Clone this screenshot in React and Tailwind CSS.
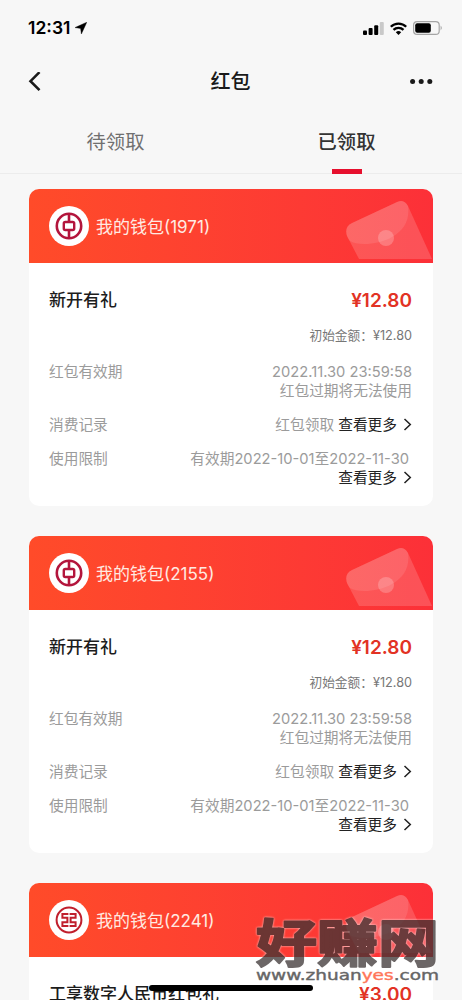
import { useState } from "react";

const cards = [
  { bank: "boc", wallet: "1971", title: "新开有礼", amount: "12.80" },
  { bank: "boc", wallet: "2155", title: "新开有礼", amount: "12.80" },
  { bank: "icbc", wallet: "2241", title: "工享数字人民币红包礼", amount: "3.00" },
];

export default function App() {
  const [tab, setTab] = useState("received");

  return (
    <div className="relative flex h-[1000px] w-[462px] flex-col overflow-hidden bg-[#f7f7f7] font-['Inter','Noto_Sans_CJK_SC',sans-serif]">
      <StatusBar />
      <NavBar />
      <div className="flex h-[64px] shrink-0 border-b border-[#ececec]">
        <Tab active={tab === "pending"} onClick={() => setTab("pending")}>待领取</Tab>
        <Tab active={tab === "received"} onClick={() => setTab("received")}>已领取</Tab>
      </div>
      <div className="flex flex-col gap-[30px] pt-[15px] pr-[29px] pl-[29px]">
        {cards.map((card) => (
          <Card key={card.wallet} {...card} />
        ))}
      </div>
      <div className="absolute top-[985px] left-[149px] h-[6px] w-[164px] rounded-full bg-black" />
      <Watermark />
    </div>
  );
}

function StatusBar() {
  return (
    <div className="flex h-[54px] shrink-0 items-center justify-between pt-[2px] pr-[19px] pl-[28px] text-black">
      <div className="flex items-center gap-[5px]">
        <span className="text-[17.5px] font-semibold">12:31</span>
        <svg width="12" height="12" viewBox="0 0 12 12">
          <path d="M11.8 0.2 L0 5.6 L5.6 6.4 L6.4 12 Z" fill="currentColor" stroke="currentColor" strokeWidth="0.4" />
        </svg>
      </div>
      <div className="flex items-center gap-[6px]">
        <svg width="21" height="13" viewBox="0 0 21 13">
          <rect x="0" y="8.5" width="4" height="4.5" rx="1" />
          <rect x="5.6" y="6" width="4" height="7" rx="1" />
          <rect x="11.2" y="3.2" width="4" height="9.8" rx="1" />
          <rect x="16.8" y="0" width="4" height="13" rx="1" fill="#c9c9c9" />
        </svg>
        <svg width="17" height="13" viewBox="0 0 17 13" fill="none" stroke="currentColor" strokeWidth="2.3">
          <path d="M0.8 4.8 A10.9 10.9 0 0 1 16.2 4.8" />
          <path d="M3.5 7.9 A7 7 0 0 1 13.5 7.9" />
          <path d="M8.5 13 L5.8 10.3 A3.9 3.9 0 0 1 11.2 10.3 Z" fill="currentColor" stroke="none" />
        </svg>
        <svg width="30" height="14" viewBox="0 0 30 14">
          <rect x="0.6" y="0.6" width="25.6" height="12.8" rx="3.5" fill="none" stroke="#a5a5a5" strokeWidth="1.2" />
          <rect x="2.2" y="2.2" width="15.6" height="9.6" rx="2" />
          <path d="M27.6 4.6 Q30 7 27.6 9.4 Z" fill="#a5a5a5" />
        </svg>
      </div>
    </div>
  );
}

function NavBar() {
  return (
    <div className="flex h-[56px] shrink-0 items-center justify-between pr-[29px] pl-[28px] text-[#1a1a1a]">
      <svg width="24" height="20" viewBox="0 0 24 20" fill="none" stroke="currentColor" strokeWidth="2.6">
        <path d="M11.5 0.2 L2.5 9.2 L11.5 18.2" />
      </svg>
      <h1 className="text-[20px] leading-[56px] font-medium">红包</h1>
      <svg width="24" height="7" viewBox="0 0 24 7" fill="currentColor">
        <circle cx="3.6" cy="2.6" r="2.5" />
        <circle cx="12.2" cy="2.6" r="2.5" />
        <circle cx="20.8" cy="2.6" r="2.5" />
      </svg>
    </div>
  );
}

function Tab({ active, onClick, children }) {
  return (
    <button onClick={onClick} className="relative flex flex-1 justify-center pt-[17px] text-[19.3px] leading-[30px]">
      <span className={active ? "font-medium text-[#333]" : "text-[#707070]"}>{children}</span>
      {active && <span className="absolute -bottom-px left-1/2 h-[5px] w-[30px] -translate-x-1/2 bg-[#e60f2d]" />}
    </button>
  );
}

function Card({ bank, wallet, title, amount }) {
  return (
    <section className="h-[317px] shrink-0 overflow-hidden rounded-[10px] bg-white">
      <div className="relative flex h-[74px] items-center gap-[7px] bg-linear-to-r from-[#ff4b29] to-[#fc3038] pl-[20px] text-[17px] text-[#ffeae2]">
        <span className="flex size-[40px] items-center justify-center rounded-full bg-white">
          {bank === "boc" ? <BocLogo /> : <IcbcLogo />}
        </span>
        <span className="pt-[3px]">我的钱包({wallet})</span>
        <Envelope />
      </div>
      <div className="pt-[22px] pr-[21px] pl-[20px] text-[14.7px] leading-[19px] text-[#9b9b9b]">
        <div className="flex h-[30px] items-center justify-between">
          <h2 className="pt-px text-[17px] font-medium text-[#1c1c1c]">{title}</h2>
          <span className="text-[19px] font-semibold text-[#e23224]">¥{amount}</span>
        </div>
        <p className="mt-[11px] text-right text-[12.7px] text-[#777]">初始金额：¥{amount}</p>
        <Row label="红包有效期" className="mt-[18px]">
          2022.11.30 23:59:58
          <br />
          红包过期将无法使用
        </Row>
        <Row label="消费记录" className="mt-[15px]">
          红包领取 <More />
        </Row>
        <Row label="使用限制" className="mt-[15px]">
          <span className="pr-[3px]">有效期2022-10-01至2022-11-30</span>
          <br />
          <More />
        </Row>
      </div>
    </section>
  );
}

function Row({ label, className, children }) {
  return (
    <div className={`flex justify-between ${className}`}>
      <span>{label}</span>
      <div className="text-right">{children}</div>
    </div>
  );
}

function More() {
  return (
    <a className="inline-flex items-center gap-[6px] text-[#222]">
      查看更多
      <svg className="mb-[2px]" width="9" height="13" viewBox="0 0 9 13" fill="none" stroke="currentColor" strokeWidth="1.5">
        <path d="M1.5 1 L7.3 6.5 L1.5 12" />
      </svg>
    </a>
  );
}

function BocLogo() {
  return (
    <svg width="28" height="28" viewBox="0 0 28 28" fill="none" stroke="#b3153c">
      <circle cx="14" cy="14" r="12.2" strokeWidth="2.6" />
      <rect x="8.8" y="10" width="10.4" height="8" rx="1.5" strokeWidth="2.4" />
      <path d="M14 2 V10 M14 18 V26" strokeWidth="2.6" />
    </svg>
  );
}

function IcbcLogo() {
  return (
    <svg width="28" height="28" viewBox="0 0 28 28" fill="none" stroke="#c01f2d">
      <circle cx="14" cy="14" r="12.4" strokeWidth="2" />
      <path d="M13.4 8 H7.4 V11.8 H12.4 V16.2 H7.4 V20 H13.4" strokeWidth="2" />
      <path d="M14.6 8 H20.6 V11.8 H15.6 V16.2 H20.6 V20 H14.6" strokeWidth="2" />
    </svg>
  );
}

function Envelope() {
  return (
    <svg className="absolute right-[1px] bottom-[4px]" width="87" height="59" viewBox="0 0 87 59">
      <path d="M2 36 Q-1 27 7 23 L52 2 Q59 -1 63 6 L87 59 H14 Z" fill="#fff" fillOpacity="0.16" />
      <path d="M2 36 Q-1 27 7 23 L52 2 Q59 -1 63 6 C65 20 59 30 47 37 C34 45 12 46 5 41 Q3 39 2 36 Z" fill="#fff" fillOpacity="0.1" />
      <circle cx="41" cy="38" r="8" fill="#fff" fillOpacity="0.22" />
    </svg>
  );
}

function Watermark() {
  return (
    <div className="absolute top-[914px] left-[254px] flex w-[188px] flex-col">
      <svg className="opacity-75 drop-shadow-[0_0_1px_#fff]" width="188" height="55" viewBox="0 0 188 55">
        <text
          x="2"
          y="48"
          textLength="183"
          lengthAdjust="spacingAndGlyphs"
          fontSize="51"
          fontWeight="700"
          fontFamily="Noto Sans CJK SC, sans-serif"
          fill="#3b3434"
          stroke="#3b3434"
          strokeWidth="2"
          strokeLinejoin="round"
        >
          好赚网
        </text>
      </svg>
      <svg width="188" height="17" viewBox="0 0 188 17">
        <text x="2" y="11" textLength="183" lengthAdjust="spacingAndGlyphs" fontSize="14" fontFamily="DejaVu Sans, sans-serif" fill="#666" stroke="#666" strokeWidth="0.4">
          www.zhuan<tspan fill="#ff7659" stroke="#ff7659">yes</tspan>.com
        </text>
      </svg>
    </div>
  );
}
